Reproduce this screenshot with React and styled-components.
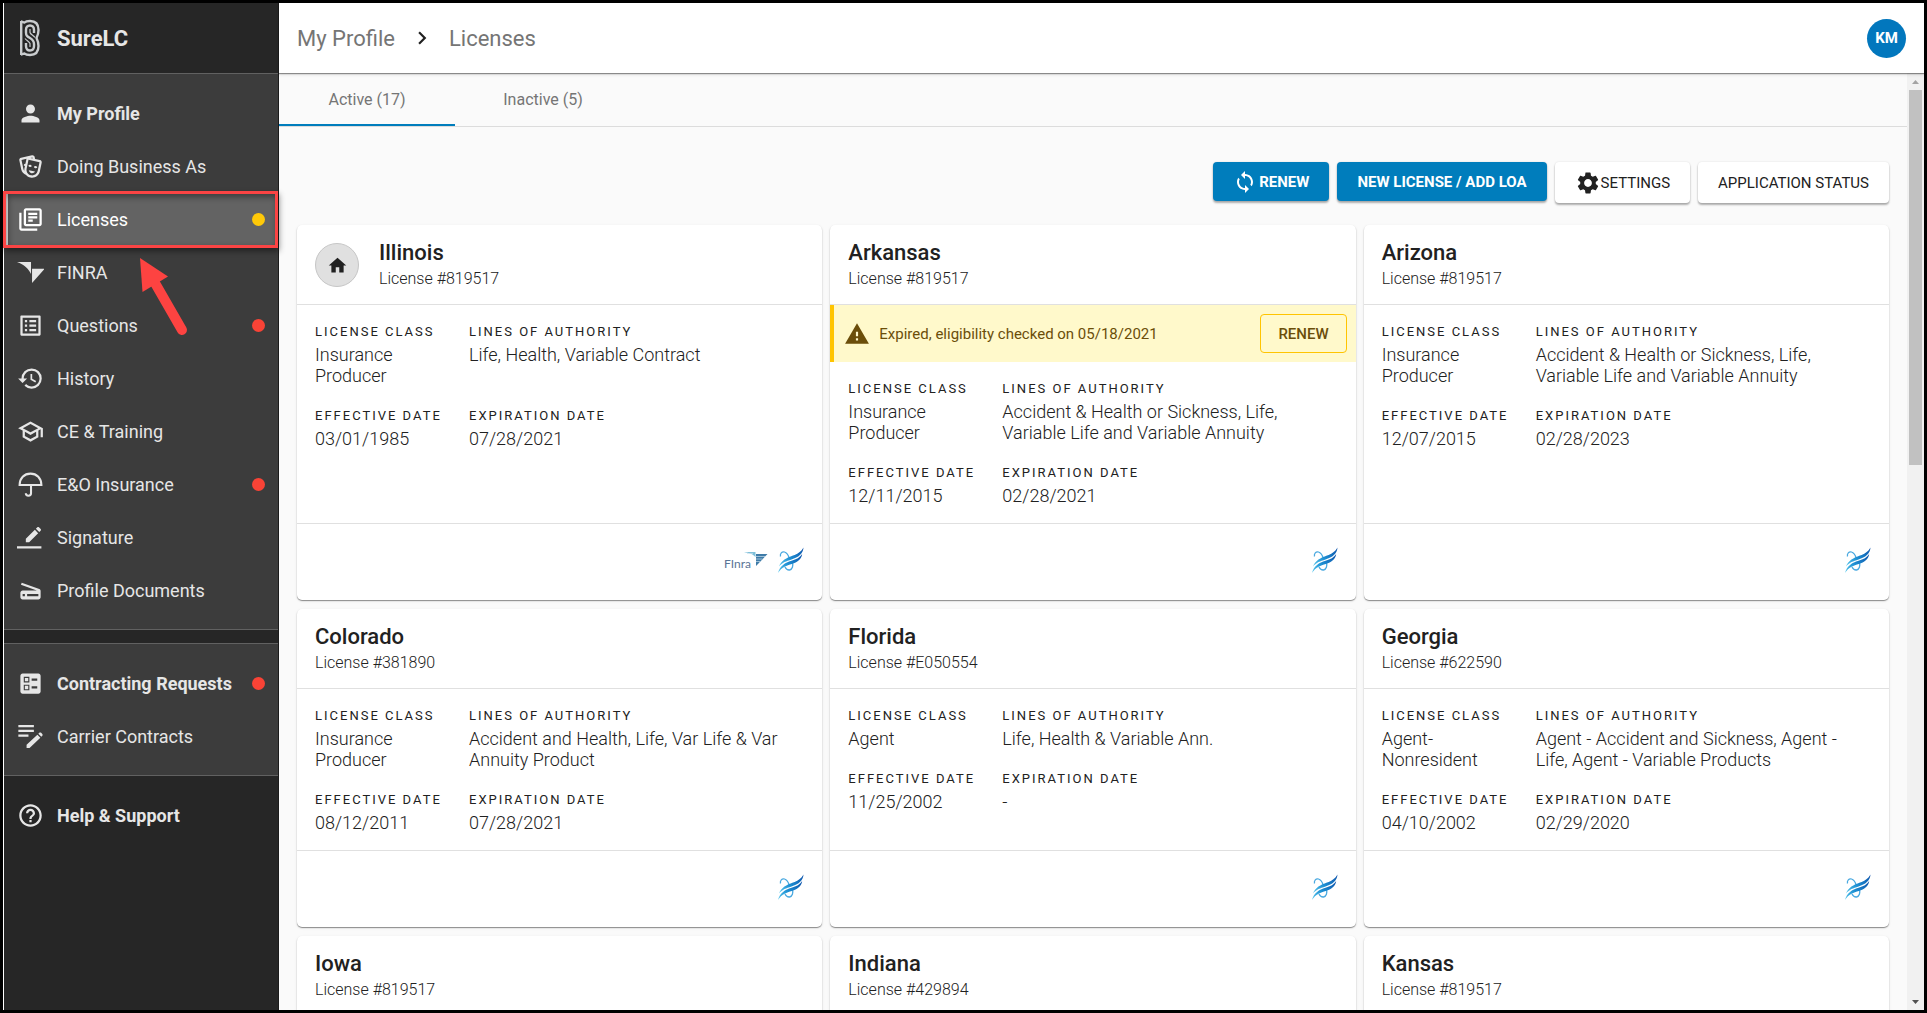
import React from "react";
import styled, { createGlobalStyle, css } from "styled-components";
import {
  MdPerson,
  MdOutlineLibraryBooks,
  MdOutlineListAlt,
  MdHistory,
  MdOutlineSchool,
  MdScanner,
  MdBallot,
  MdHelpOutline,
  MdChevronRight,
  MdLoop,
  MdSettings,
  MdHome,
  MdWarning,
} from "react-icons/md";

const GlobalStyle = createGlobalStyle`
  * {
    box-sizing: border-box;
  }
  body {
    margin: 0;
    background: #000;
    color: #212121;
    font-family: Roboto, "Liberation Sans", sans-serif;
    font-size: 18px;
  }
  button {
    font-family: inherit;
    cursor: pointer;
  }
  h1, h2, p, ul, dl, dd {
    margin: 0;
    padding: 0;
  }
`;

const Shell = styled.div`
  position: relative;
  display: grid;
  grid-template-columns: 276px minmax(0, 1fr);
  height: 100vh;
  padding: 3px;
  overflow: hidden;
`;

/* ---------- sidebar ---------- */

const Sidebar = styled.aside`
  display: flex;
  flex-direction: column;
  min-height: 0;
  background: #262626;
  border-left: 1px solid #fff;
  border-right: 1px solid #1b1b1b;
  color: #e6e6e6;
`;

const Brand = styled.div`
  display: flex;
  align-items: center;
  height: 70px;
  padding: 0 13px;
  gap: 14px;
  font-size: 22px;
  font-weight: 700;
`;

const NavSection = styled.ul`
  list-style: none;
  padding: 13px 0 12px;

  ${(p) =>
    p.$raised &&
    css`
      background: #3c3c3c;
      border-top: 1px solid #616161;
      border-bottom: 1px solid #616161;
    `}

  &:nth-of-type(2) {
    margin-top: 13px;
  }
`;

const NavLink = styled.a`
  position: relative;
  display: flex;
  align-items: center;
  gap: 14px;
  height: 53px;
  padding: 0 13px;
  color: ${(p) => (p.$active ? "#fff" : "#e6e6e6")};
  font-weight: ${(p) => (p.$strong ? 700 : 400)};
  text-decoration: none;
  white-space: nowrap;
  background: ${(p) => (p.$active ? "#636363" : "transparent")};

  svg {
    flex: none;
    width: 27px;
    height: 27px;
    margin-right: -1px;
  }
`;

const Dot = styled.span`
  width: 13px;
  height: 13px;
  margin-left: auto;
  border-radius: 50%;
  background: ${(p) => (p.$tone === "warn" ? "#ffc908" : "#f94336")};
`;

/* callout drawn over the selected item */
const Callout = styled.span`
  position: absolute;
  inset: -2px 0 -2px -1px;
  border: 3px solid #fb4444;
  box-shadow: 1px 3px 6px rgba(0, 0, 0, 0.45),
    inset 2px 3px 6px rgba(0, 0, 0, 0.4), inset 2px 0 0 #f5f5f5;
  pointer-events: none;
`;

const Pointer = styled.svg`
  && {
    position: absolute;
    left: 130px;
    top: 60px;
    width: 64px;
    height: 84px;
    z-index: 2;
    pointer-events: none;
  }
`;

/* ---------- main column ---------- */

const Main = styled.main`
  display: flex;
  flex-direction: column;
  min-width: 0;
  min-height: 0;
  background: #fafafa;
`;

const TopBar = styled.header`
  position: relative;
  z-index: 1;
  flex: none;
  display: flex;
  align-items: center;
  justify-content: space-between;
  height: 70px;
  padding: 0 18px;
  background: #fff;
  box-shadow: 0 1px 1px rgba(0, 0, 0, 0.4), 0 2px 3px rgba(0, 0, 0, 0.1);
`;

const Crumbs = styled.nav`
  display: flex;
  align-items: center;
  gap: 14px;
  font-size: 22px;

  a {
    color: #757575;
    text-decoration: none;
  }
`;

const Avatar = styled.button`
  width: 39px;
  height: 39px;
  padding: 0;
  border: none;
  border-radius: 50%;
  background: #0277bd;
  color: #fff;
  font-size: 15px;
  font-weight: 700;
`;

const Body = styled.div`
  flex: 1;
  display: flex;
  min-height: 0;
`;

const Scroll = styled.div`
  flex: 1;
  min-width: 0;
  overflow: hidden;
`;

const Tabs = styled.div`
  display: flex;
  height: 54px;
  border-bottom: 1px solid #dcdcdc;
`;

const Tab = styled.button`
  width: 176px;
  padding: 2px 0 0;
  border: none;
  border-bottom: 2px solid ${(p) => (p.$active ? "#007dbc" : "transparent")};
  background: none;
  color: #757575;
  font-size: 16px;
`;

const Content = styled.div`
  padding: 35px 18px 0;
`;

const Actions = styled.div`
  display: flex;
  justify-content: flex-end;
  align-items: flex-start;
  gap: 8px;
  margin-bottom: 22px;
`;

const Action = styled.button`
  display: flex;
  align-items: center;
  justify-content: center;
  height: 41px;
  padding: 0 20px;
  border: none;
  border-radius: 4px;
  background: #fff;
  color: #212121;
  font-size: 15px;
  box-shadow: 0 2px 2px rgba(0, 0, 0, 0.3), 0 0 2px rgba(0, 0, 0, 0.12);
  text-transform: uppercase;

  ${(p) =>
    p.$primary &&
    css`
      height: 39px;
      gap: 2px;
      background: #007dbc;
      color: #fff;
      font-weight: 700;
    `}
`;

const CardGrid = styled.div`
  display: grid;
  grid-template-columns: repeat(3, minmax(0, 1fr));
  gap: 9px 8px;
`;

const Card = styled.article`
  display: flex;
  flex-direction: column;
  overflow: hidden;
  border-radius: 5px;
  background: #fff;
  box-shadow: 0 1px 1px rgba(0, 0, 0, 0.4), 0 1px 3px rgba(0, 0, 0, 0.1);
`;

const CardHead = styled.div`
  display: flex;
  align-items: center;
  gap: 20px;
  height: 80px;
  padding: 1px 18px 0;
  border-bottom: 1px solid #e0e0e0;

  h2 {
    font-size: 22px;
    line-height: 26px;
    font-weight: 500;
  }
  p {
    margin-top: 1px;
    font-size: 16px;
    line-height: 24px;
    font-weight: 300;
  }
`;

const HomeBadge = styled.span`
  display: flex;
  align-items: center;
  justify-content: center;
  width: 44px;
  height: 44px;
  border: 1px solid #c6c6c6;
  border-radius: 50%;
  background: #e0e0e0;
`;

const Alert = styled.div`
  display: flex;
  align-items: center;
  gap: 9px;
  height: 57px;
  padding: 0 9px 0 10px;
  border-left: 4px solid #ffc400;
  background: #fff9cb;
  color: #6b4e0a;
  font-size: 15px;

  button {
    height: 39px;
    margin-left: auto;
    padding: 0 17px;
    border: 1px solid #ffc400;
    border-radius: 4px;
    background: transparent;
    color: #6b4e0a;
    font-size: 15px;
    font-weight: 500;
  }
`;

const Fields = styled.dl`
  flex: 1;
  display: grid;
  grid-template-columns: 136px minmax(0, 1fr);
  align-content: start;
  gap: 22px 18px;
  padding: 19px 36px 17px 18px;

  dt {
    margin-bottom: 4px;
    font-size: 13px;
    line-height: 16px;
    font-weight: 400;
    letter-spacing: 2px;
    text-transform: uppercase;
    white-space: nowrap;
  }
  dd {
    line-height: 21px;
    font-weight: 300;
  }
`;

const CardFoot = styled.div`
  display: flex;
  align-items: center;
  justify-content: flex-end;
  gap: 9px;
  height: 77px;
  padding: 0 18px 4px;
  border-top: 1px solid #e0e0e0;
`;

/* ---------- scrollbar ---------- */

const Track = styled.div`
  flex: none;
  display: flex;
  flex-direction: column;
  align-items: center;
  width: 17px;
  background: #f1f1f1;
`;

const Thumb = styled.div`
  flex: 0 1 40%;
  width: 13px;
  background: #c1c1c1;
`;

const ScrollArrow = styled.button`
  width: 17px;
  height: 17px;
  padding: 0;
  border: none;
  background: none;
  line-height: 0;
  ${(p) => p.$end && "margin-top: auto;"}
`;

/* ---------- drawings ---------- */

const SureLogo = () => (
  <svg width="26" height="38" viewBox="0 0 26 38" fill="none" aria-hidden="true">
    <g stroke="#c9ccce" strokeWidth="2.4">
      <path d="M4.200 2v34M4 2.500c1.500 0 2 1 3.500 1C9 2 11 2 13 2c6 0 8.500 3.500 8.500 9 0 4-1 6-2 8 1 2 2 4 2 8 0 5.500-2.500 9-8.500 9-2 0-4 0-5.500-1.500-1.500 0-2 1-3.500 1" />
      <path d="M17 14v-3c0-3-1.500-4.500-4-4.500S9 8 9 11v2.500c0 3 1 3.700 4 5.500s4 3 4 6V27c0 3-1.500 4.500-4 4.500S9 30 9 27v-3" />
    </g>
    <path
      d="M13 10v3.500c.5 2 3.500 3 5 5M13 28v-3.500c-.5-2-3.500-3-5-5"
      stroke="#c9ccce"
      strokeWidth="1.200"
    />
  </svg>
);

const MasksIcon = () => (
  <svg viewBox="0 0 24 24" fill="currentColor" aria-hidden="true">
    <path d="M8.110,19.450C5.940,18.650 4.220,16.780 3.710,14.350L2.050,6.540C1.810,5.460 2.500,4.400 3.580,4.170L13.350,2.100L13.380,2.090C14.450,1.880 15.500,2.570 15.720,3.630L16.070,5.300L20.420,6.230H20.450C21.500,6.470 22.180,7.530 21.960,8.590L20.300,16.410C19.500,20.180 15.780,22.600 12,21.790C10.420,21.460 9.080,20.610 8.110,19.450M20,8.180L10.230,6.100L8.570,13.920V13.950C8,16.630 9.730,19.270 12.420,19.840C15.110,20.410 17.770,18.690 18.340,16L20,8.180M16,16.500C15.370,17.570 14.110,18.160 12.830,17.890C11.560,17.620 10.650,16.570 10.500,15.340L16,16.500M8.470,5.170L4,6.130L5.660,13.940L5.670,13.970C5.820,14.680 6.120,15.320 6.530,15.870C6.430,15.100 6.450,14.300 6.620,13.500L7.050,11.500C6.600,11.420 6.210,11.170 6,10.810C6.060,10.200 6.560,9.660 7.250,9.500C7.330,9.500 7.400,9.500 7.500,9.500L8.280,5.690C8.320,5.500 8.380,5.330 8.470,5.170M15.030,12.230C15.350,11.700 16.030,11.420 16.720,11.570C17.410,11.710 17.910,12.240 18,12.860C17.670,13.380 17,13.660 16.300,13.500C15.610,13.370 15.110,12.840 15.030,12.230M10.150,11.190C10.470,10.660 11.140,10.380 11.830,10.530C12.500,10.670 13.030,11.210 13.110,11.820C12.780,12.340 12.110,12.630 11.420,12.500C10.730,12.330 10.230,11.800 10.150,11.190M11.970,4.430L13.930,4.850L13.770,4.050L11.970,4.430Z" />
  </svg>
);

const FinraIcon = () => (
  <svg viewBox="0 0 26 26" fill="currentColor" aria-hidden="true">
    <path d="M0 3h13.500v11.500C11 9.500 7 5.500 0 3zM14.500 9.500H26.500L14.500 23z" />
  </svg>
);

const UmbrellaIcon = () => (
  <svg viewBox="0 0 26 26" fill="none" stroke="currentColor" strokeWidth="2" aria-hidden="true">
    <path d="M2.500 13.500C2.500 7 7 2.500 13 2.500S23.500 7 23.500 13.500zM13.500 13.500v8c0 3-5 3-5 0" />
  </svg>
);

const SignIcon = () => (
  <svg viewBox="0 0 26 26" fill="currentColor" aria-hidden="true">
    <path d="M8.500 14.300V17.500h3.200l8.700-8.700-3.200-3.200zM18.200 4.600l3.200 3.200 1.400-1.400c.5-.5.5-1 0-1.500l-1.700-1.700c-.5-.5-1-.5-1.500 0zM0 21.500h23.500v2H0z" />
  </svg>
);

const EditListIcon = () => (
  <svg viewBox="2 4 20 20" fill="currentColor" aria-hidden="true">
    <path d="M3 9h11.500v1.700H3zM3 5.500h11.500v1.700H3zM3 12.500h7.500v1.700H3zM17.800 12l.7-.7c.4-.4 1-.4 1.400 0l.8.8c.4.4.4 1 0 1.400l-.7.7zM17.100 12.700l-8 7.500V22.500h2.200l8-7.600z" />
  </svg>
);

const FinraLogo = () => (
  <svg width="44" height="24" viewBox="0 0 44 24" aria-label="FINRA">
    <text x="0" y="20" fontSize="12" fontFamily="Lato, sans-serif" fill="#5b7596">
      FInra
    </text>
    <path d="M20 4h11.500v5c-3-3-6-4-11.500-5z" fill="#7fc0da" />
    <path d="M32 6h11.500L32 18z" fill="#3f7ba8" />
    <path d="M32 8.500h9M32 11h6.500M32 13.500h4M23 5.500h6" stroke="#c9dfec" strokeWidth=".7" />
  </svg>
);

const SwooshLogo = () => (
  <svg width="27" height="27" viewBox="0 0 27 27" fill="none" aria-hidden="true">
    <defs>
      <linearGradient id="swoosh" x1="0" y1="1" x2="1" y2="0">
        <stop offset="0" stopColor="#5ccbee" />
        <stop offset=".45" stopColor="#1d8ed2" />
        <stop offset="1" stopColor="#0c4fa8" />
      </linearGradient>
    </defs>
    <path
      d="M3.500 9.500C2.800 6.500 5 4.200 7.500 5c2.500.8 3.700 3 4.500 5.500M15.500 15c.8 4 0 7.500-3 8-2 .2-3.500-1-4.500-3"
      stroke="#4aa9e0"
      strokeWidth="1.300"
    />
    <g fill="url(#swoosh)">
      <path d="M26.500.5C24 5 20.500 6.800 16 8.600 9.500 11 4.500 13.500 2 19.500c3.500-4.200 7-5.200 12.500-7C21.500 10.300 26 7 26.500.5z" />
      <path d="M25.200 7C23 10.500 19.500 12.300 14.500 13.800 8 15.800 3 18.800 1 26c4-5.800 8-7.200 13-8.700 6-1.800 10.400-4.800 11.200-10.300z" />
    </g>
  </svg>
);

/* ---------- data ---------- */

const profileLinks = [
  { label: "My Profile", icon: MdPerson, strong: true },
  { label: "Doing Business As", icon: MasksIcon },
  { label: "Licenses", icon: MdOutlineLibraryBooks, active: true, dot: "warn" },
  { label: "FINRA", icon: FinraIcon },
  { label: "Questions", icon: MdOutlineListAlt, dot: "error" },
  { label: "History", icon: MdHistory },
  { label: "CE & Training", icon: MdOutlineSchool },
  { label: "E&O Insurance", icon: UmbrellaIcon, dot: "error" },
  { label: "Signature", icon: SignIcon },
  { label: "Profile Documents", icon: MdScanner },
];

const contractLinks = [
  { label: "Contracting Requests", icon: MdBallot, strong: true, dot: "error" },
  { label: "Carrier Contracts", icon: EditListIcon },
];

const helpLinks = [{ label: "Help & Support", icon: MdHelpOutline, strong: true }];

const licenses = [
  {
    state: "Illinois",
    number: "819517",
    home: true,
    finra: true,
    type: "Insurance Producer",
    lines: "Life, Health, Variable Contract",
    effective: "03/01/1985",
    expires: "07/28/2021",
  },
  {
    state: "Arkansas",
    number: "819517",
    alert: "Expired, eligibility checked on 05/18/2021",
    type: "Insurance Producer",
    lines: "Accident & Health or Sickness, Life, Variable Life and Variable Annuity",
    effective: "12/11/2015",
    expires: "02/28/2021",
  },
  {
    state: "Arizona",
    number: "819517",
    type: "Insurance Producer",
    lines: "Accident & Health or Sickness, Life, Variable Life and Variable Annuity",
    effective: "12/07/2015",
    expires: "02/28/2023",
  },
  {
    state: "Colorado",
    number: "381890",
    type: "Insurance Producer",
    lines: "Accident and Health, Life, Var Life & Var Annuity Product",
    effective: "08/12/2011",
    expires: "07/28/2021",
  },
  {
    state: "Florida",
    number: "E050554",
    type: "Agent",
    lines: "Life, Health & Variable Ann.",
    effective: "11/25/2002",
    expires: "-",
  },
  {
    state: "Georgia",
    number: "622590",
    type: "Agent-Nonresident",
    lines: "Agent - Accident and Sickness, Agent - Life, Agent - Variable Products",
    effective: "04/10/2002",
    expires: "02/29/2020",
  },
  { state: "Iowa", number: "819517" },
  { state: "Indiana", number: "429894" },
  { state: "Kansas", number: "819517" },
];

const NavItems = ({ items }) =>
  items.map(({ label, icon: Icon, active, strong, dot }) => (
    <li key={label}>
      <NavLink href="#" $active={active} $strong={strong}>
        <Icon />
        {label}
        {dot && <Dot $tone={dot} />}
        {active && (
          <>
            <Callout />
            <Pointer viewBox="0 0 64 84" aria-hidden="true">
              <path d="M21 30l27 47" stroke="#fd4341" strokeWidth="10" strokeLinecap="round" />
              <path d="M6 5l28 18.500L8.500 39z" fill="#fd4341" />
            </Pointer>
          </>
        )}
      </NavLink>
    </li>
  ));

const Field = ({ label, value }) => (
  <div>
    <dt>{label}</dt>
    <dd>{value}</dd>
  </div>
);

const LicenseCard = ({ license }) => (
  <Card>
    <CardHead>
      {license.home && (
        <HomeBadge>
          <MdHome size={21} />
        </HomeBadge>
      )}
      <div>
        <h2>{license.state}</h2>
        <p>License #{license.number}</p>
      </div>
    </CardHead>
    {license.alert && (
      <Alert>
        <MdWarning size={26} />
        {license.alert}
        <button type="button">RENEW</button>
      </Alert>
    )}
    {license.type && (
      <>
        <Fields>
          <Field label="License Class" value={license.type} />
          <Field label="Lines of Authority" value={license.lines} />
          <Field label="Effective Date" value={license.effective} />
          <Field label="Expiration Date" value={license.expires} />
        </Fields>
        <CardFoot>
          {license.finra && <FinraLogo />}
          <SwooshLogo />
        </CardFoot>
      </>
    )}
  </Card>
);

const App = () => {
  return (
    <>
      <GlobalStyle />
      <Shell>
        <Sidebar>
          <Brand>
            <SureLogo />
            SureLC
          </Brand>
          <NavSection $raised>
            <NavItems items={profileLinks} />
          </NavSection>
          <NavSection $raised>
            <NavItems items={contractLinks} />
          </NavSection>
          <NavSection>
            <NavItems items={helpLinks} />
          </NavSection>
        </Sidebar>

        <Main>
          <TopBar>
            <Crumbs>
              <a href="#">My Profile</a>
              <MdChevronRight size={26} />
              <a href="#">Licenses</a>
            </Crumbs>
            <Avatar type="button">KM</Avatar>
          </TopBar>

          <Body>
            <Scroll>
              <Tabs>
                <Tab type="button" $active>
                  Active (17)
                </Tab>
                <Tab type="button">Inactive (5)</Tab>
              </Tabs>
              <Content>
                <Actions>
                  <Action type="button" $primary>
                    <MdLoop size={24} />
                    Renew
                  </Action>
                  <Action type="button" $primary>
                    New License / Add LOA
                  </Action>
                  <Action type="button">
                    <MdSettings size={26} />
                    Settings
                  </Action>
                  <Action type="button">Application Status</Action>
                </Actions>
                <CardGrid>
                  {licenses.map((license) => (
                    <LicenseCard key={license.state} license={license} />
                  ))}
                </CardGrid>
              </Content>
            </Scroll>
            <Track>
              <ScrollArrow type="button" aria-label="Scroll up">
                <svg width="7" height="4" viewBox="0 0 7 4">
                  <path d="M0 4l3.500-4L7 4z" fill="#a3a3a3" />
                </svg>
              </ScrollArrow>
              <Thumb />
              <ScrollArrow type="button" $end aria-label="Scroll down">
                <svg width="7" height="4" viewBox="0 0 7 4">
                  <path d="M0 0h7L3.500 4z" fill="#505050" />
                </svg>
              </ScrollArrow>
            </Track>
          </Body>
        </Main>
      </Shell>
    </>
  );
};

export default App;
